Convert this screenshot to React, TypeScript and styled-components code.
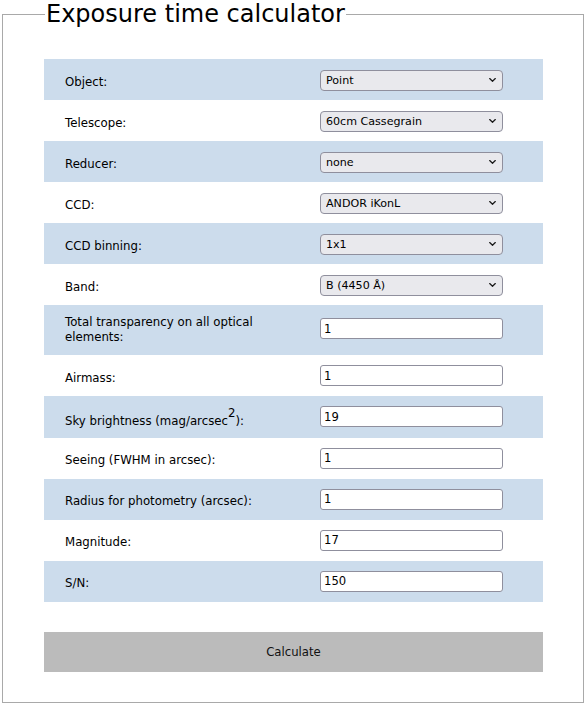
import React from "react";
import styled, { createGlobalStyle } from "styled-components";

const GlobalStyle = createGlobalStyle`
  html, body {
    margin: 0;
    padding: 0;
    overflow: hidden;
    background: #ffffff;
    font-family: "DejaVu Sans", "Noto Sans", sans-serif;
    color: #000;
  }
`;

const Fieldset = styled.fieldset`
  margin: 0 2px;
  padding: 0 0 30px 0;
  border: 1px solid #a9a9a9;
  min-width: 0;
  box-sizing: border-box;
`;

const Legend = styled.legend`
  margin-left: 42px;
  padding: 0 1px;
  font-size: 24px;
  line-height: 28px;
  color: #000;
`;

const Table = styled.div`
  width: 499px;
  margin: 31px 0 0 41px;
  display: flex;
  flex-direction: column;
`;

const Row = styled.div<{ $shaded: boolean }>`
  display: grid;
  grid-template-columns: 276px 1fr;
  align-items: center;
  background: ${(p) => (p.$shaded ? "#ccdcec" : "transparent")};
`;

const LabelCell = styled.label<{ $wrap?: boolean }>`
  padding: ${(p) => (p.$wrap ? "10px 20px 10px 21px" : "14.5px 20px 9.5px 21px")};
  font-size: 11.75px;
  line-height: 15px;
  color: #000;

  sup {
    font-size: 1em;
    line-height: 5.8px;
    vertical-align: 7.5px;
  }
`;

const FieldCell = styled.div<{ $top?: boolean }>`
  padding: ${(p) => (p.$top ? "13px 0 0 0" : "10px 0")};
  align-self: ${(p) => (p.$top ? "start" : "center")};
  display: flex;
  align-items: center;
`;

const SelectWrap = styled.div`
  position: relative;
  width: 183px;
  height: 21px;
`;

const Select = styled.select`
  appearance: none;
  -webkit-appearance: none;
  width: 183px;
  height: 21px;
  box-sizing: border-box;
  margin: 0;
  padding: 0 20px 0 5px;
  border: 1px solid #8f8f9d;
  border-radius: 4px;
  background: #e9e9ed;
  color: #000;
  font-family: "DejaVu Sans", sans-serif;
  font-size: 11.1px;
  outline: none;
`;

const Chevron = styled.svg`
  position: absolute;
  right: 7px;
  top: 8.5px;
  width: 7px;
  height: 4px;
  pointer-events: none;
`;

const Input = styled.input`
  width: 183px;
  height: 21px;
  box-sizing: border-box;
  margin: 0;
  padding: 0 3px;
  border: 1px solid #8f8f9d;
  border-radius: 3px;
  background: #ffffff;
  color: #000;
  font-family: "DejaVu Sans", sans-serif;
  font-size: 11.6px;
  outline: none;
`;

const Button = styled.button`
  display: block;
  width: 499px;
  height: 40px;
  margin: 30px 0 0 41px;
  border: none;
  background: #bbbbbb;
  font-family: "DejaVu Sans", sans-serif;
  font-size: 11.7px;
  color: #111;
  padding: 0;
`;

type Field =
  | { label: React.ReactNode; kind: "select"; value: string; options: string[]; wrap?: boolean }
  | { label: React.ReactNode; kind: "input"; value: string; wrap?: boolean };

const fields: Field[] = [
  { label: "Object:", kind: "select", value: "Point", options: ["Point", "Extended"] },
  { label: "Telescope:", kind: "select", value: "60cm Cassegrain", options: ["60cm Cassegrain"] },
  { label: "Reducer:", kind: "select", value: "none", options: ["none"] },
  { label: "CCD:", kind: "select", value: "ANDOR iKonL", options: ["ANDOR iKonL"] },
  { label: "CCD binning:", kind: "select", value: "1x1", options: ["1x1", "2x2"] },
  { label: "Band:", kind: "select", value: "B (4450 Å)", options: ["B (4450 Å)"] },
  { label: "Total transparency on all optical elements:", kind: "input", value: "1", wrap: true },
  { label: "Airmass:", kind: "input", value: "1" },
  {
    label: (
      <>
        Sky brightness (mag/arcsec<sup>2</sup>):
      </>
    ),
    kind: "input",
    value: "19",
  },
  { label: "Seeing (FWHM in arcsec):", kind: "input", value: "1" },
  { label: "Radius for photometry (arcsec):", kind: "input", value: "1" },
  { label: "Magnitude:", kind: "input", value: "17" },
  { label: "S/N:", kind: "input", value: "150" },
];

export default function App() {
  return (
    <>
      <GlobalStyle />
      <Fieldset>
        <Legend>Exposure time calculator</Legend>
        <Table>
          {fields.map((f, i) => (
            <Row key={i} $shaded={i % 2 === 0}>
              <LabelCell $wrap={f.wrap}>{f.label}</LabelCell>
              <FieldCell $top={f.wrap}>
                {f.kind === "select" ? (
                  <SelectWrap>
                    <Select defaultValue={f.value}>
                      {f.options.map((o) => (
                        <option key={o} value={o}>
                          {o}
                        </option>
                      ))}
                    </Select>
                    <Chevron viewBox="0 0 7 4" aria-hidden="true">
                      <polyline
                        points="0.7,0.6 3.5,3.2 6.3,0.6"
                        fill="none"
                        stroke="#1b1b1b"
                        strokeWidth="1.3"
                        strokeLinecap="round"
                        strokeLinejoin="round"
                      />
                    </Chevron>
                  </SelectWrap>
                ) : (
                  <Input type="text" defaultValue={f.value} />
                )}
              </FieldCell>
            </Row>
          ))}
        </Table>
        <Button type="button">Calculate</Button>
      </Fieldset>
    </>
  );
}
